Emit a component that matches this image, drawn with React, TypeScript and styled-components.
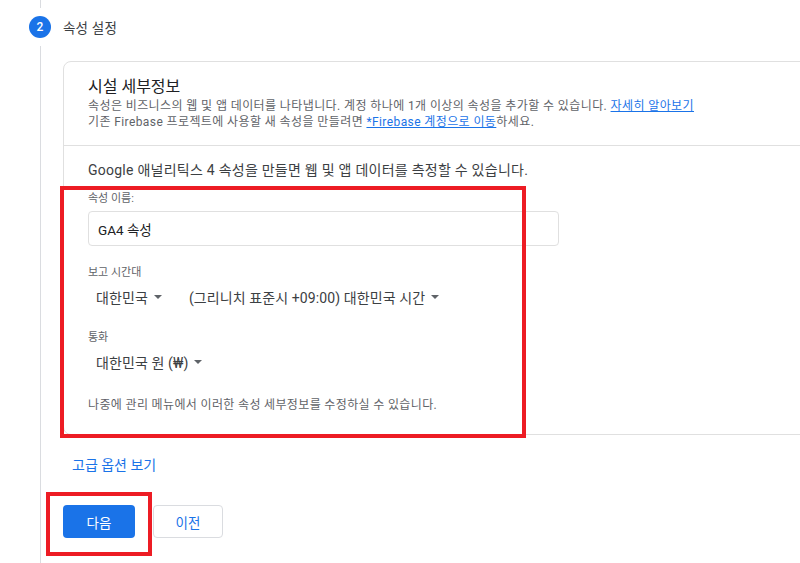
import React from 'react'
import styled, { createGlobalStyle } from 'styled-components'

const GlobalStyle = createGlobalStyle`
	html, body {
		margin: 0;
		padding: 0;
		background: #ffffff;
	}
	body {
		font-family: Roboto, 'Noto Sans CJK KR', sans-serif;
		color: #3c4043;
	}
`

const Page = styled.div`
	display: flex;
	width: 800px;
	height: 563px;
	overflow: hidden;
	background: #ffffff;
`

const Rail = styled.div`
	display: flex;
	flex-direction: column;
	align-items: center;
	width: 22px;
	padding-left: 29px;
	margin-right: 12px;
	flex-shrink: 0;
`

const RailLine = styled.div<{ $grow?: boolean }>`
	width: 1px;
	background: #dadce0;
	height: ${(p) => (p.$grow ? 'auto' : '8px')};
	flex: ${(p) => (p.$grow ? '1' : 'none')};
`

const StepBadge = styled.div`
	width: 22px;
	height: 22px;
	margin: 8px 0;
	border-radius: 50%;
	background: #1a73e8;
	color: #ffffff;
	font-size: 12px;
	font-weight: 500;
	display: flex;
	align-items: center;
	justify-content: center;
	flex-shrink: 0;
`

const Content = styled.div`
	flex: 1;
	display: flex;
	flex-direction: column;
	padding-top: 16px;
	min-width: 0;
`

const StepTitle = styled.div`
	height: 22px;
	display: flex;
	align-items: center;
	font-size: 13.5px;
	letter-spacing: 0.2px;
	color: #3c4043;
`

const Card = styled.div`
	margin-top: 23px;
	width: 760px;
	border: 1px solid #e0e0e0;
	border-radius: 8px;
	background: #ffffff;
	box-sizing: border-box;
`

const CardSection = styled.div<{ $divider?: boolean }>`
	padding: ${(p) => (p.$divider ? '14px 24px 21px' : '14px 24px 15px')};
	border-top: ${(p) => (p.$divider ? '1px solid #e0e0e0' : 'none')};
`

const CardTitle = styled.div`
	font-size: 16px;
	line-height: 22px;
	color: #202124;
`

const Desc = styled.div`
	font-size: 12px;
	letter-spacing: 0.4px;
	line-height: 16px;
	color: #5f6368;
`

const Link = styled.a`
	color: #1a73e8;
	text-decoration: underline;
	cursor: pointer;
`

const Intro = styled.div`
	font-size: 14px;
	letter-spacing: 0.25px;
	line-height: 20px;
	color: #3c4043;
	margin-bottom: 11px;
`

const Highlighted = styled.div`
	position: relative;
`

const Annotation = styled.div<{ $left: number; $top: number; $w: number; $h: number }>`
	position: absolute;
	left: ${(p) => p.$left}px;
	top: ${(p) => p.$top}px;
	width: ${(p) => p.$w}px;
	height: ${(p) => p.$h}px;
	border: 4px solid #ed1c24;
	box-sizing: border-box;
	pointer-events: none;
`

const FieldLabel = styled.div`
	font-size: 11px;
	line-height: 16px;
	color: #5f6368;
`

const TextInput = styled.div`
	margin-top: 4px;
	width: 471px;
	height: 35px;
	box-sizing: border-box;
	border: 1px solid #e0e0e0;
	border-radius: 4px;
	padding: 0 9px;
	display: flex;
	align-items: center;
	font-size: 13.5px;
	color: #202124;
`

const Field = styled.div<{ $gap: number }>`
	margin-top: ${(p) => p.$gap}px;
`

const SelectRow = styled.div`
	display: flex;
	align-items: center;
	gap: 27px;
	height: 32px;
	padding-left: 8px;
`

const Select = styled.div`
	display: flex;
	align-items: center;
	gap: 6px;
	font-size: 14px;
	letter-spacing: 0.1px;
	color: #3c4043;
`

const Help = styled.div`
	margin-top: 19px;
	font-size: 12px;
	letter-spacing: 0.35px;
	line-height: 16px;
	color: #5f6368;
`

const AdvancedLink = styled.div`
	margin-top: 20px;
	padding-left: 9px;
	font-size: 14px;
	line-height: 20px;
	color: #1a73e8;
`

const Actions = styled.div`
	display: flex;
	gap: 18px;
	margin-top: 30px;
`

const ButtonWrap = styled.div`
	position: relative;
`

const Button = styled.button<{ $primary?: boolean }>`
	height: 33px;
	width: ${(p) => (p.$primary ? '72px' : '70px')};
	border-radius: 4px;
	font-family: Roboto, 'Noto Sans CJK KR', sans-serif;
	font-size: 13.5px;
	cursor: pointer;
	background: ${(p) => (p.$primary ? '#1a73e8' : '#ffffff')};
	color: ${(p) => (p.$primary ? '#ffffff' : '#1a73e8')};
	border: ${(p) => (p.$primary ? 'none' : '1px solid #dadce0')};
	padding: 0;
`

function Caret() {
	return (
		<svg width="8" height="4" viewBox="0 0 8 4">
			<path d="M0 0h8L4 4z" fill="#5f6368" />
		</svg>
	)
}

export default function App() {
	return (
		<>
			<GlobalStyle />
			<Page>
				<Rail>
					<RailLine />
					<StepBadge>2</StepBadge>
					<RailLine $grow />
				</Rail>
				<Content>
					<StepTitle>속성 설정</StepTitle>
					<Card>
						<CardSection>
							<CardTitle>시설 세부정보</CardTitle>
							<Desc>
								속성은 비즈니스의 웹 및 앱 데이터를 나타냅니다. 계정 하나에 1개 이상의 속성을 추가할 수 있습니다.{' '}
								<Link>자세히 알아보기</Link>
							</Desc>
							<Desc>
								기존 Firebase 프로젝트에 사용할 새 속성을 만들려면 <Link>*Firebase 계정으로 이동</Link>하세요.
							</Desc>
						</CardSection>
						<CardSection $divider>
							<Intro>Google 애널리틱스 4 속성을 만들면 웹 및 앱 데이터를 측정할 수 있습니다.</Intro>
							<Highlighted>
								<FieldLabel>속성 이름:</FieldLabel>
								<TextInput>GA4 속성</TextInput>
								<Field $gap={19}>
									<FieldLabel>보고 시간대</FieldLabel>
									<SelectRow>
										<Select>
											대한민국 <Caret />
										</Select>
										<Select>
											(그리니치 표준시 +09:00) 대한민국 시간 <Caret />
										</Select>
									</SelectRow>
								</Field>
								<Field $gap={17}>
									<FieldLabel>통화</FieldLabel>
									<SelectRow>
										<Select>
											대한민국 원 (₩) <Caret />
										</Select>
									</SelectRow>
								</Field>
								<Help>나중에 관리 메뉴에서 이러한 속성 세부정보를 수정하실 수 있습니다.</Help>
								<Annotation $left={-28} $top={-5} $w={466} $h={252} />
							</Highlighted>
						</CardSection>
					</Card>
					<AdvancedLink>고급 옵션 보기</AdvancedLink>
					<Actions>
						<ButtonWrap>
							<Button $primary>다음</Button>
							<Annotation $left={-17} $top={-13} $w={106} $h={64} />
						</ButtonWrap>
						<ButtonWrap>
							<Button>이전</Button>
						</ButtonWrap>
					</Actions>
				</Content>
			</Page>
		</>
	)
}
